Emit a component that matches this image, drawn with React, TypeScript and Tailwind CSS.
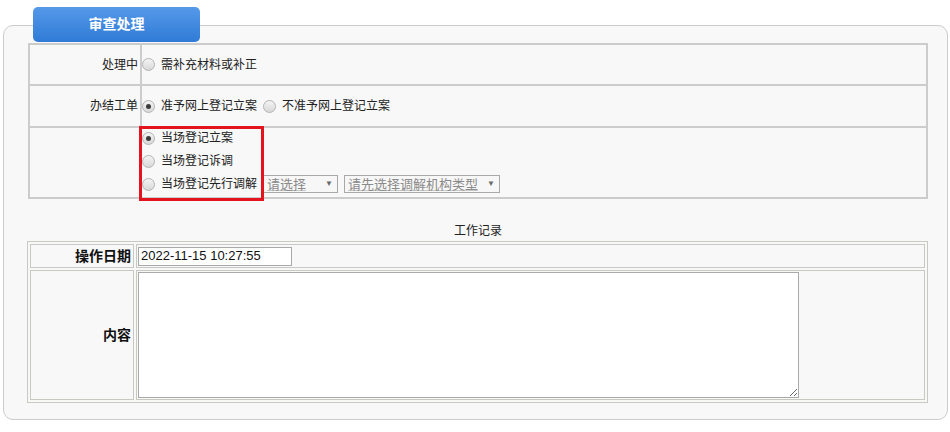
import React from "react";

const font = {
  fontFamily: '"Liberation Sans", "Noto Sans CJK SC", sans-serif',
};

function Radio({ checked }: { checked?: boolean }) {
  return (
    <span className="relative inline-flex h-[13px] w-[13px] shrink-0 items-center justify-center rounded-full border border-[#b4b4b4] bg-gradient-to-b from-[#f4f4f4] to-[#d8d8d8]">
      {checked && <span className="h-[5px] w-[5px] rounded-full bg-[#3c3c3c]" />}
    </span>
  );
}

function FakeSelect({ text, width }: { text: string; width: string }) {
  return (
    <span
      className={`inline-flex h-[18px] items-center justify-between border border-[#a9a9a9] bg-[#f7f7f7] pl-[3px] pr-[4px] text-[13px] leading-none text-[#8a8a8a] ${width}`}
    >
      <span className="underline decoration-[#c8c8c8]">{text}</span>
      <span className="text-[8px] text-[#6a6a6a]">▼</span>
    </span>
  );
}

export default function App() {
  return (
    <div className="h-[432px] w-[950px] overflow-hidden bg-white pt-[7px]" style={font}>
      <div className="relative z-10 ml-[33px] flex h-[35px] w-[167px] items-center justify-center rounded-[5px] bg-gradient-to-b from-[#5599e8] to-[#2f7bd7] text-[14px] font-bold text-white">
        审查处理
      </div>

      <div className="relative ml-[3px] mr-[2px] -mt-[17px] h-[395px] rounded-[10px] border border-[#cccccc] bg-[#f8f8f8] pl-[24px] pt-[17px]">
        <table className="w-[900px] border-collapse border-2 border-[#cccccc] text-[12px] text-[#222]">
          <tbody>
            <tr className="h-[41px]">
              <td className="w-[112px] border-2 border-[#cccccc] pr-[2px] text-right">处理中</td>
              <td className="border-2 border-[#cccccc]">
                <div className="flex items-center gap-[6px]">
                  <Radio />
                  <span>需补充材料或补正</span>
                </div>
              </td>
            </tr>
            <tr className="h-[42px]">
              <td className="border-2 border-[#cccccc] pr-[2px] text-right">办结工单</td>
              <td className="border-2 border-[#cccccc]">
                <div className="flex items-center gap-[6px]">
                  <Radio checked />
                  <span>准予网上登记立案</span>
                  <Radio />
                  <span>不准予网上登记立案</span>
                </div>
              </td>
            </tr>
            <tr className="h-[71px]">
              <td className="border-2 border-[#cccccc]" />
              <td className="relative border-2 border-[#cccccc] align-top">
                <div className="flex flex-col gap-[5px] pt-[1px]">
                  <div className="flex items-center gap-[6px]">
                    <Radio checked />
                    <span>当场登记立案</span>
                  </div>
                  <div className="flex items-center gap-[6px]">
                    <Radio />
                    <span>当场登记诉调</span>
                  </div>
                  <div className="flex items-center gap-[6px]">
                    <Radio />
                    <span>当场登记先行调解</span>
                    <FakeSelect text="请选择" width="w-[75px]" />
                    <FakeSelect text="请先选择调解机构类型" width="w-[156px]" />
                  </div>
                </div>
                <div className="pointer-events-none absolute left-[-3px] top-[-2px] h-[75px] w-[125px] border-[3px] border-[#e3141d]" />
              </td>
            </tr>
          </tbody>
        </table>

        <div className="mt-[23px] w-[900px] text-center text-[12px] text-[#222]">工作记录</div>

        <table className="ml-[-1px] mt-[1px] w-[901px] border-separate border-spacing-[2px] border border-[#c9c9c1] text-[#111]">
          <tbody>
            <tr className="h-[24px]">
              <td className="w-[104px] border border-[#c9c9c1] pr-[2px] text-right text-[14px] font-bold">操作日期</td>
              <td className="border border-[#c9c9c1] px-[1px]">
                <div className="flex h-[19px] w-[154px] items-center border border-[#a9a9a9] bg-white px-[2px] text-[13px]">
                  2022-11-15 10:27:55
                </div>
              </td>
            </tr>
            <tr className="h-[130px]">
              <td className="border border-[#c9c9c1] pr-[2px] text-right text-[14px] font-bold">内容</td>
              <td className="border border-[#c9c9c1] px-[1px] py-[1px]">
                <textarea
                  className="block h-[126px] w-[661px] resize border border-[#a9a9a9] bg-white outline-none"
                  defaultValue=""
                />
              </td>
            </tr>
          </tbody>
        </table>
      </div>
    </div>
  );
}
